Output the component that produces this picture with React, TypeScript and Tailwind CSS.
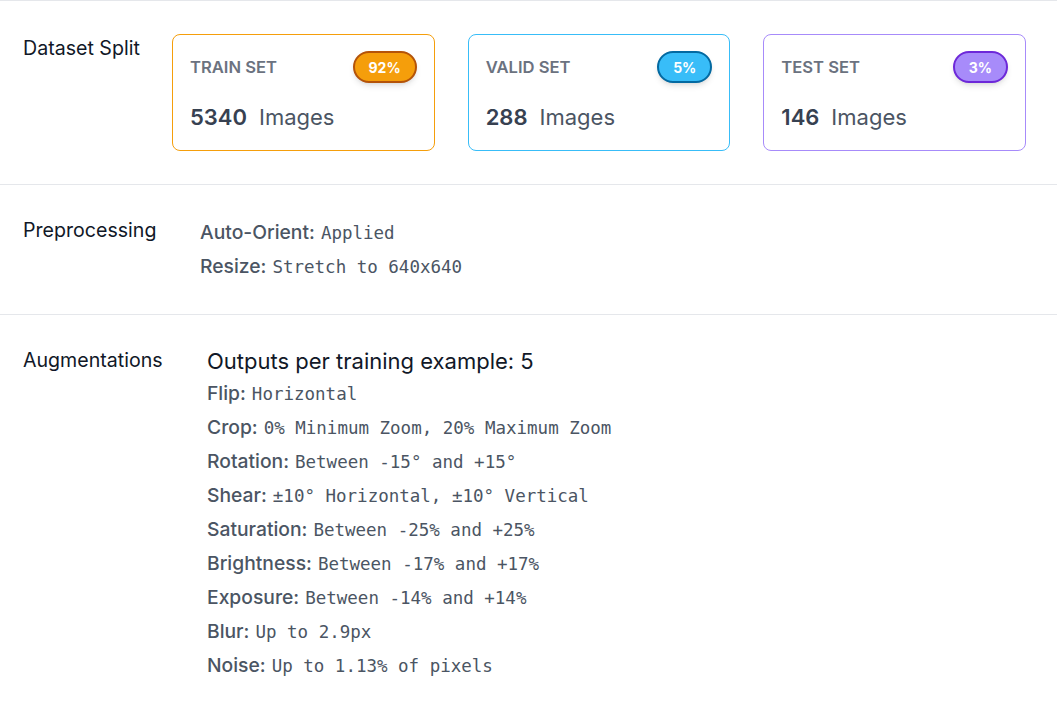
import React from 'react';

interface SplitCard {
  label: string;
  pct: string;
  count: number;
  card: string;
  badge: string;
}

const splits: SplitCard[] = [
  { label: 'TRAIN SET', pct: '92%', count: 5340, card: 'border-[#f59e0b]', badge: 'bg-[#f59e0b] border-[#b45309]' },
  { label: 'VALID SET', pct: '5%', count: 288, card: 'border-[#38bdf8]', badge: 'bg-[#38bdf8] border-[#0369a1]' },
  { label: 'TEST SET', pct: '3%', count: 146, card: 'border-[#a78bfa]', badge: 'bg-[#a78bfa] border-[#6d28d9]' }
];

const preprocessing: [string, string][] = [
  ['Auto-Orient:', 'Applied'],
  ['Resize:', 'Stretch to 640x640']
];

const augmentations: [string, string][] = [
  ['Flip:', 'Horizontal'],
  ['Crop:', '0% Minimum Zoom, 20% Maximum Zoom'],
  ['Rotation:', 'Between -15° and +15°'],
  ['Shear:', '±10° Horizontal, ±10° Vertical'],
  ['Saturation:', 'Between -25% and +25%'],
  ['Brightness:', 'Between -17% and +17%'],
  ['Exposure:', 'Between -14% and +14%'],
  ['Blur:', 'Up to 2.9px'],
  ['Noise:', 'Up to 1.13% of pixels']
];

function Setting({ name, value }: { name: string; value: string }) {
  return (
    <div className="h-[34px] flex items-center whitespace-nowrap">
      <span className="text-[19.3px] font-medium text-[#4b5563]">{name}</span>
      <span className="ml-[6px] mt-[2px] text-[17.5px] text-[#4b5563] font-['DejaVu_Sans_Mono',monospace]">{value}</span>
    </div>
  );
}

export default function App() {
  return (
    <div className="w-[1057px] min-h-[715px] bg-white font-['Inter',sans-serif] border-t border-[#e5e7eb]">
      <section className="flex items-start pl-[23px] pr-[31px] pt-[33px] pb-[33px] border-b border-[#e5e7eb]">
        <h2 className="w-[149px] shrink-0 mt-px text-[19.6px] leading-[26px] text-[#111827]">Dataset Split</h2>
        <div className="flex-1 grid grid-cols-3 gap-[33px]">
          {splits.map((s) => (
            <div key={s.label} className={`border ${s.card} rounded-[8px] px-[17px] pt-[16px] pb-[18px]`}>
              <div className="h-[32px] flex items-center justify-between">
                <span className="text-[16.6px] font-semibold text-[#6b7280]">{s.label}</span>
                <span className={`h-[32px] flex items-center px-[14px] rounded-full border-2 ${s.badge} text-white text-[14px] font-bold shadow-md`}>
                  {s.pct}
                </span>
              </div>
              <div className="mt-[19px] h-[30px] flex items-center text-[22px]">
                <span className="font-semibold text-[#374151]">{s.count}</span>
                <span className="ml-[12px] text-[#4b5563]">Images</span>
              </div>
            </div>
          ))}
        </div>
      </section>

      <section className="flex items-start pl-[23px] pt-[30px] pb-[31px] border-b border-[#e5e7eb]">
        <h2 className="w-[177px] shrink-0 h-[32px] flex items-center text-[19.6px] text-[#111827]">Preprocessing</h2>
        <div>
          {preprocessing.map(([n, v]) => (
            <Setting key={n} name={n} value={v} />
          ))}
        </div>
      </section>

      <section className="flex items-start pl-[23px] pt-[31px] pb-[33px]">
        <h2 className="w-[184px] shrink-0 h-[30px] flex items-center text-[19.6px] text-[#111827]">Augmentations</h2>
        <div>
          <div className="h-[30px] flex items-center text-[22px] text-[#111827]">Outputs per training example: 5</div>
          {augmentations.map(([n, v]) => (
            <Setting key={n} name={n} value={v} />
          ))}
        </div>
      </section>
    </div>
  );
}
